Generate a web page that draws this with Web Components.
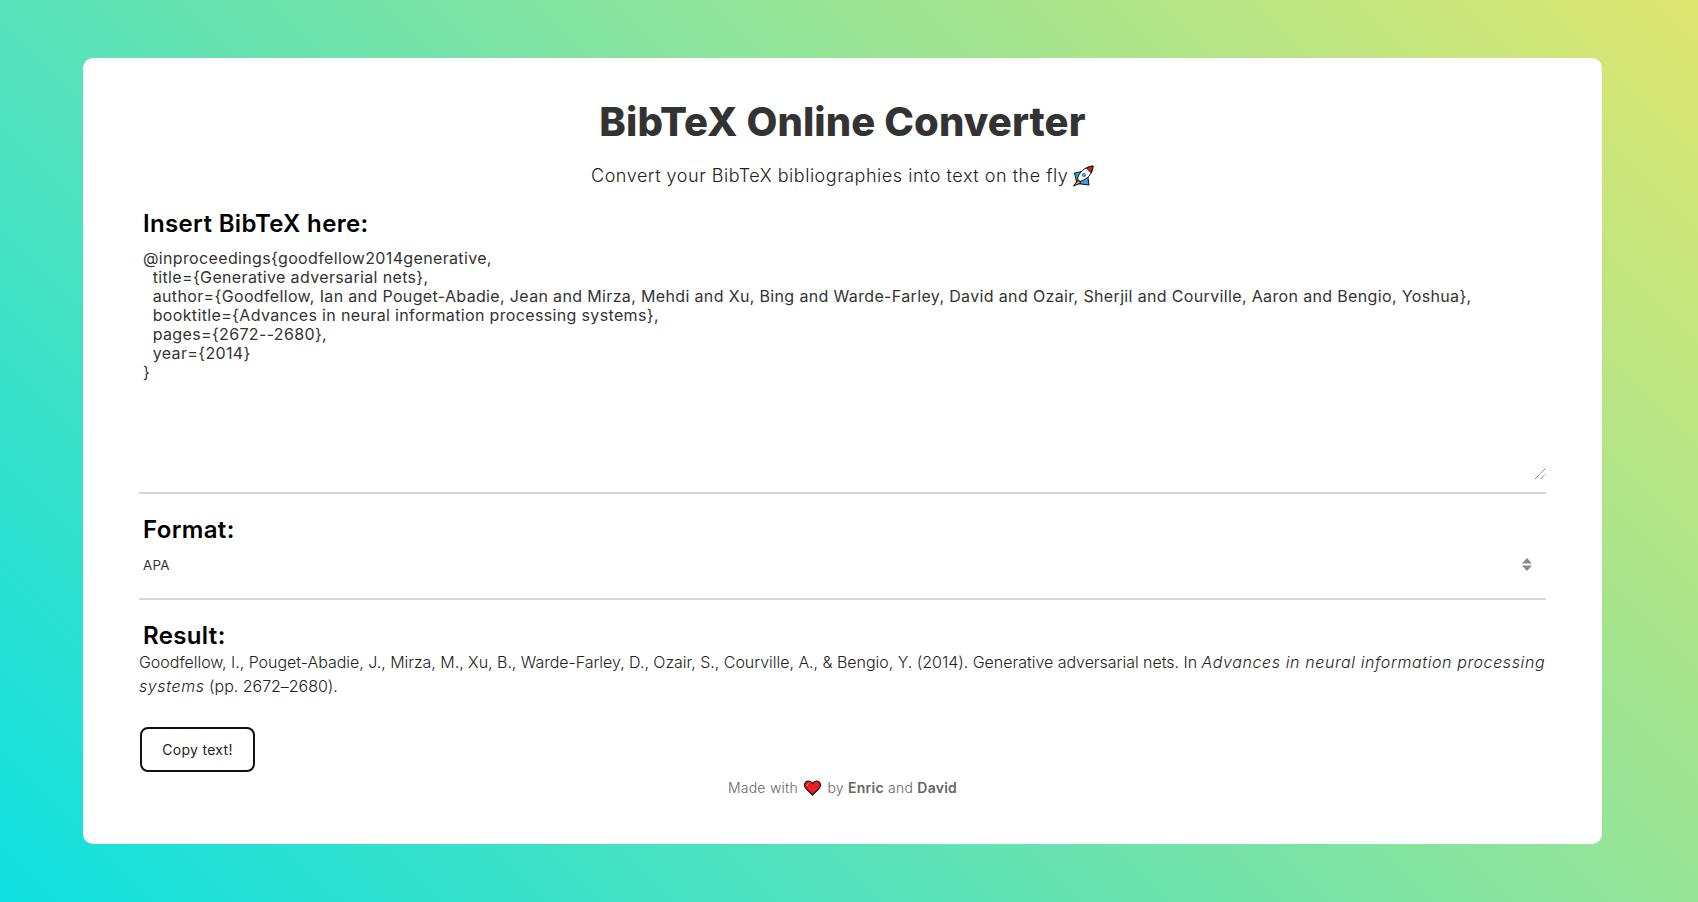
<!DOCTYPE html>
<html lang="en">
<head>
<meta charset="utf-8">
<title>BibTeX Online Converter</title>
<style>
    html, body { height: 100%; }
    body {
        margin: 0;
        font-family: Inter, "Liberation Sans", sans-serif;
        background: linear-gradient(45deg, #0fe0e0, #dfe670);
    }
</style>
</head>
<body>
<bib-card>
    <bib-header></bib-header>
    <bib-field label="Insert BibTeX here:" divider><bib-input></bib-input></bib-field>
    <bib-field label="Format:" divider><bib-format></bib-format></bib-field>
    <bib-field label="Result:" tight><bib-result></bib-result></bib-field>
    <bib-footer></bib-footer>
</bib-card>
<script>
class BibCard extends HTMLElement {
    constructor() {
        super()
        this.attachShadow({mode: 'open'}).innerHTML = `
            <style>
                :host {
                    display: block;
                    box-sizing: border-box;
                    width: 1519px;
                    height: 786px;
                    position: relative;
                    top: 58px;
                    margin: 0 auto;
                    left: -6.5px;
                    padding: 40px 56px 0;
                    background: white;
                    border-radius: 10px;
                }
            </style>
            <slot></slot>
        `
    }
}

class BibHeader extends HTMLElement {
    constructor() {
        super()
        this.attachShadow({mode: 'open'}).innerHTML = `
            <style>
                :host { display: block; text-align: center; }
                h1 {
                    margin: 0;
                    font-size: 40px;
                    line-height: 48px;
                    font-weight: 800;
                    color: #333;
                    letter-spacing: .1px;
                }
                p {
                    margin: 18px 0 0;
                    font-size: 18px;
                    line-height: 24px;
                    font-weight: 300;
                    color: #222;
                    letter-spacing: .53px;
                }
                svg { width: 22px; height: 22px; vertical-align: -5px; margin-left: -2px; }
            </style>
            <h1>BibTeX Online Converter</h1>
            <p>Convert your BibTeX bibliographies into text on the fly
                <svg viewBox="0 0 22 22">
                    <path d="M2.5 8 L15 5.5 L17 20 L5 18.5 Z" fill="#2ba6ea" stroke="#111" stroke-width="1" stroke-linejoin="round"/>
                    <path d="M6 15 L1.5 21 L9 18 Z" fill="#f08a24" stroke="#111" stroke-width="1" stroke-linejoin="round"/>
                    <path d="M5.5 14 C6.5 8 12 2 21 1 C21 9 15 14.5 8 16.5 Z" fill="#f6f6f6" stroke="#111" stroke-width="1" stroke-linejoin="round"/>
                    <path d="M14.5 3 C16.5 1.8 19 1.2 21 1 C20.8 3.4 20 5.6 18.8 7.6 Z" fill="#e8141c" stroke="#111" stroke-width="1" stroke-linejoin="round"/>
                    <circle cx="12" cy="10" r="1.7" fill="#2ba6ea" stroke="#555" stroke-width=".6"/>
                </svg>
            </p>
        `
    }
}

class BibField extends HTMLElement {
    constructor() {
        super()
        this.attachShadow({mode: 'open'}).innerHTML = `
            <style>
                :host { display: block; margin-top: 20px; }
                :host([divider]) { border-bottom: 2px solid #d6d6d6; }
                h2 {
                    margin: 0 0 2px;
                    padding: 2px 0 0 4px;
                    font-size: 24px;
                    line-height: 28px;
                    font-weight: 600;
                    color: #000;
                    letter-spacing: .35px;
                }
                :host([tight]) h2 { margin-bottom: 0; }
            </style>
            <h2></h2>
            <slot></slot>
        `
    }

    connectedCallback() {
        this.shadowRoot.querySelector('h2').textContent = this.getAttribute('label')
    }
}

class BibInput extends HTMLElement {
    constructor() {
        super()
        this.attachShadow({mode: 'open'}).innerHTML = `
            <style>
                :host { display: block; position: relative; padding: 4px 0 15px; }
                textarea {
                    display: block;
                    box-sizing: border-box;
                    width: 100%;
                    height: 233px;
                    margin: 0;
                    padding: 5px 4px;
                    border: 0;
                    outline: 0;
                    resize: none;
                    white-space: pre;
                    overflow: hidden;
                    font: 400 16px/19px Inter, "Liberation Sans", sans-serif;
                    letter-spacing: .35px;
                    color: #333;
                    background: transparent;
                }
                svg { position: absolute; right: 0; bottom: 13px; width: 11px; height: 11px; pointer-events: none; }
            </style>
            <textarea spellcheck="false">@inproceedings{goodfellow2014generative,
  title={Generative adversarial nets},
  author={Goodfellow, Ian and Pouget-Abadie, Jean and Mirza, Mehdi and Xu, Bing and Warde-Farley, David and Ozair, Sherjil and Courville, Aaron and Bengio, Yoshua},
  booktitle={Advances in neural information processing systems},
  pages={2672--2680},
  year={2014}
}</textarea>
            <svg viewBox="0 0 11 11"><path d="M0 11 L10.5 .5 M5.5 11 L10.5 6" stroke="#555" stroke-width="1" stroke-dasharray="1 .6" fill="none"/></svg>
        `
    }
}

class BibFormat extends HTMLElement {
    constructor() {
        super()
        this.attachShadow({mode: 'open'}).innerHTML = `
            <style>
                :host { display: block; position: relative; padding-bottom: 15px; }
                select {
                    display: block;
                    box-sizing: border-box;
                    width: 100%;
                    height: 37px;
                    padding: 0 4px;
                    border: 0;
                    outline: 0;
                    appearance: none;
                    background: transparent;
                    font: 400 13.33px Inter, "Liberation Sans", sans-serif;
                    letter-spacing: .3px;
                    color: #333;
                }
                svg { position: absolute; right: 14px; top: 12px; width: 10px; height: 13px; pointer-events: none; }
            </style>
            <select><option>APA</option></select>
            <svg viewBox="0 0 10 13"><path d="M5 0 L10 5.5 L0 5.5 Z M5 13 L10 7.5 L0 7.5 Z" fill="#8a8a8a"/></svg>
        `
    }
}

class BibResult extends HTMLElement {
    constructor() {
        super()
        this.attachShadow({mode: 'open'}).innerHTML = `
            <style>
                :host { display: block; }
                p {
                    margin: 0;
                    font-size: 16px;
                    line-height: 24px;
                    font-weight: 300;
                    color: #222;
                    letter-spacing: -.03px;
                }
                i { letter-spacing: .6px; }
                button {
                    display: block;
                    box-sizing: border-box;
                    width: 115px;
                    height: 45px;
                    margin: 29px 0 0 1px;
                    background: white;
                    border: 2px solid #111;
                    border-radius: 8px;
                    font: 400 14px Inter, "Liberation Sans", sans-serif;
                    letter-spacing: .3px;
                    color: #222;
                }
            </style>
            <p>Goodfellow, I., Pouget-Abadie, J., Mirza, M., Xu, B., Warde-Farley, D., Ozair, S., Courville, A., &amp; Bengio, Y. (2014). Generative adversarial nets. In <i>Advances in neural information processing systems</i> (pp. 2672–2680).</p>
            <button>Copy text!</button>
        `
    }
}

class BibFooter extends HTMLElement {
    constructor() {
        super()
        this.attachShadow({mode: 'open'}).innerHTML = `
            <style>
                :host {
                    display: block;
                    margin-top: 6px;
                    text-align: center;
                    font-size: 14px;
                    line-height: 20px;
                    font-weight: 300;
                    color: #666;
                    letter-spacing: .25px;
                }
                b { font-weight: 600; }
                svg { width: 17px; height: 16px; vertical-align: -3px; margin: 0 2px; }
            </style>
            Made with
            <svg viewBox="0 0 17 16"><path d="M8.5 15 L1.8 8.4 C-.6 5.4 .8 1 4.4 1 C6.2 1 7.6 2 8.5 3.6 C9.4 2 10.8 1 12.6 1 C16.2 1 17.6 5.4 15.2 8.4 Z" fill="#ee1c25" stroke="#111" stroke-width="1.2" stroke-linejoin="round"/><path d="M3 6 C3.2 4.6 4 3.6 5 3.4" fill="none" stroke="#f7941d" stroke-width="1"/></svg>
            by <b>Enric</b> and <b>David</b>
        `
    }
}

customElements.define('bib-card', BibCard)
customElements.define('bib-header', BibHeader)
customElements.define('bib-field', BibField)
customElements.define('bib-input', BibInput)
customElements.define('bib-format', BibFormat)
customElements.define('bib-result', BibResult)
customElements.define('bib-footer', BibFooter)
</script>
</body>
</html>
